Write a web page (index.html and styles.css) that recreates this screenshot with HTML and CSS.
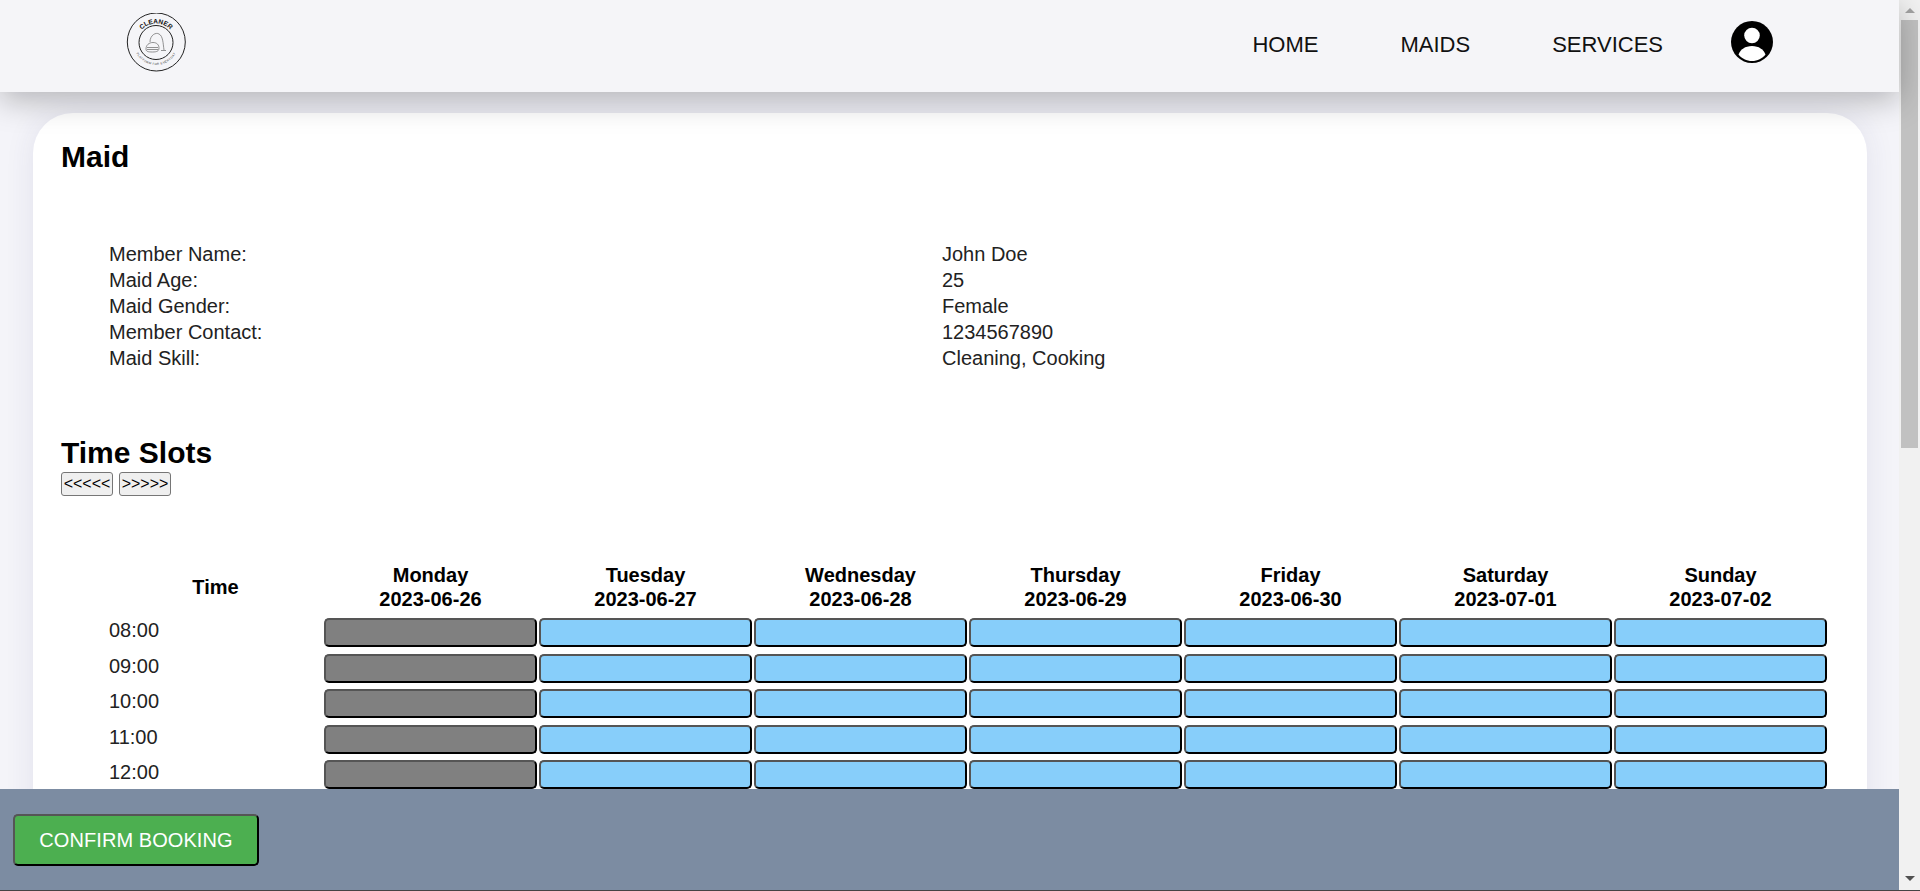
FILE: index.html
```html
<!DOCTYPE html>
<html lang="en">
<head>
<meta charset="utf-8">
<title>Maid</title>
<link rel="stylesheet" href="styles.css">
</head>
<body>
<div class="page">
  <div class="main">
    <header class="topbar">
      <svg class="logo" viewBox="0 0 60 60" aria-label="Cleaner logo">
        <defs>
          <path id="arcTop" d="M11 29.500a19 19 0 0 1 38 0"/>
          <path id="arcBottom" d="M7.500 29.500a22.500 22.500 0 0 0 45 0"/>
        </defs>
        <circle cx="30.300" cy="29" r="29" class="logo-line"/>
        <circle cx="30" cy="29.500" r="17" class="logo-line"/>
        <text class="logo-title"><textPath href="#arcTop" startOffset="50%" text-anchor="middle">CLEANER</textPath></text>
        <text class="logo-sub"><textPath href="#arcBottom" startOffset="50%" text-anchor="middle">PLATFORM FOR EVERYDAY</textPath></text>
        <path class="logo-thin" d="M24 29C24 22 30 19 33 21C37 23 37 30 38 37M35 37.500h5"/>
        <path class="logo-thin" d="M20 36c0-4 3-6.500 7-6.500s6 2.500 6 5.500-2 4-6.500 4-6.500-.5-6.500-3z"/>
        <path class="logo-thin" d="M21 34.500h11M21 36.500h11"/>
      </svg>
      <nav class="nav">
        <a class="nav-link">HOME</a>
        <a class="nav-link">MAIDS</a>
        <a class="nav-link">SERVICES</a>
      </nav>
      <svg class="avatar" viewBox="0 0 42 42" aria-label="Account">
        <circle cx="21" cy="21" r="21" fill="#000"/>
        <circle cx="21" cy="14.500" r="7.800" fill="#fff"/>
        <path d="M21 25c-7 0-11.500 3.500-13.500 8.500 3.200 4 8 6.500 13.500 6.500s10.300-2.500 13.500-6.500C32.500 28.500 28 25 21 25z" fill="#fff"/>
      </svg>
    </header>

    <main class="content">
      <section class="card">
        <h2 class="title">Maid</h2>
        <div class="info">
          <div>Member Name:</div><div>John Doe</div>
          <div>Maid Age:</div><div>25</div>
          <div>Maid Gender:</div><div>Female</div>
          <div>Member Contact:</div><div>1234567890</div>
          <div>Maid Skill:</div><div>Cleaning, Cooking</div>
        </div>
        <h2 class="title slots-title">Time Slots</h2>
        <div class="pager">
          <button class="pager-btn">&lt;&lt;&lt;&lt;&lt;</button>
          <button class="pager-btn">&gt;&gt;&gt;&gt;&gt;</button>
        </div>
        <div class="timetable">
          <div class="head">Time</div>
          <div class="head">Monday<br>2023-06-26</div>
          <div class="head">Tuesday<br>2023-06-27</div>
          <div class="head">Wednesday<br>2023-06-28</div>
          <div class="head">Thursday<br>2023-06-29</div>
          <div class="head">Friday<br>2023-06-30</div>
          <div class="head">Saturday<br>2023-07-01</div>
          <div class="head">Sunday<br>2023-07-02</div>

          <div class="time">08:00</div>
          <button class="slot off"></button><button class="slot"></button><button class="slot"></button><button class="slot"></button><button class="slot"></button><button class="slot"></button><button class="slot"></button>
          <div class="time">09:00</div>
          <button class="slot off"></button><button class="slot"></button><button class="slot"></button><button class="slot"></button><button class="slot"></button><button class="slot"></button><button class="slot"></button>
          <div class="time">10:00</div>
          <button class="slot off"></button><button class="slot"></button><button class="slot"></button><button class="slot"></button><button class="slot"></button><button class="slot"></button><button class="slot"></button>
          <div class="time">11:00</div>
          <button class="slot off"></button><button class="slot"></button><button class="slot"></button><button class="slot"></button><button class="slot"></button><button class="slot"></button><button class="slot"></button>
          <div class="time">12:00</div>
          <button class="slot off"></button><button class="slot"></button><button class="slot"></button><button class="slot"></button><button class="slot"></button><button class="slot"></button><button class="slot"></button>
        </div>
      </section>
    </main>

    <footer class="bottombar">
      <button class="confirm">CONFIRM BOOKING</button>
    </footer>
  </div>
  <div class="scrollbar" aria-hidden="true">
    <span class="arrow up"></span>
    <span class="track"><span class="thumb"></span></span>
    <span class="arrow down"></span>
  </div>
</div>
</body>
</html>
```

FILE: styles.css
```css
* { box-sizing: border-box; }
html, body { margin: 0; height: 100%; overflow: hidden; }
body { font-family: "Liberation Sans", Arial, sans-serif; color: #222; background: #f4f4f9; }

.page { display: flex; height: 891px; border-bottom: 1px solid #444; }
.main { flex: 1; min-width: 0; display: flex; flex-direction: column; height: 890px; }

.topbar {
  flex: none; height: 92px; padding: 13px 126px 0; background: #f5f5f8;
  display: flex; align-items: flex-start;
  box-shadow: 0 8px 32px rgba(0, 0, 0, .27); position: relative; z-index: 2;
}
.logo { width: 60px; height: 60px; flex: none; }
.logo-line { fill: none; stroke: #222; stroke-width: 1; }
.logo-thin { fill: none; stroke: #666; stroke-width: .7; }
.logo-title { font: bold 6.600px "Liberation Sans", sans-serif; fill: #111; }
.logo-sub { font: 3px "Liberation Sans", sans-serif; fill: #333; letter-spacing: .35px; }
.nav { margin-left: auto; display: flex; gap: 82px; padding-top: 19px; }
.nav-link { font-size: 22px; line-height: 25px; color: #111; }
.avatar { width: 42px; height: 42px; flex: none; margin: 8px 0 0 68px; }

.content { flex: 1; min-height: 0; overflow: hidden; padding: 21px 32px 0 33px; background: #f4f4f9; }
.card {
  background: #fff; border-radius: 40px 40px 0 0; padding: 27px 28px 0;
  height: 760px; box-shadow: 0 0 30px rgba(40, 40, 110, .09);
}
.title { margin: 0; font-size: 30px; line-height: 34px; font-weight: bold; color: #000; }
.info {
  display: grid; grid-template-columns: 833px 1fr; grid-auto-rows: 26px;
  margin: 67px 0 0 48px; font-size: 20px; line-height: 26px; color: #222;
}
.slots-title { margin-top: 65px; }
.pager { display: flex; gap: 6px; margin-top: 2px; }
.pager-btn {
  width: 52px; height: 24px; padding: 0; font: 16px/20px "Liberation Sans", sans-serif; color: #000;
  background: #efefef; border: 1px solid #767676; border-radius: 3px;
}
.timetable {
  display: grid; grid-template-columns: repeat(8, 213px); column-gap: 2px;
  grid-template-rows: 48.500px repeat(5, 29px); row-gap: 6.500px;
  margin: 67px 0 0 48px;
}
.head { font-size: 20px; line-height: 24px; font-weight: bold; text-align: center; color: #000; align-self: center; }
.time { font-size: 20px; line-height: 25px; color: #222; }
.slot {
  display: block; padding: 0; width: 213px; height: 29px;
  background: #87cefa; border: 2px solid; border-radius: 5px;
  border-color: #555 #000 #000 #555;
}
.slot.off { background: #808080; }

.bottombar { flex: none; height: 101px; background: #7c8ca2; padding: 25px 13px 0; position: relative; z-index: 3; }
.confirm {
  display: block; width: 246px; height: 52px; padding: 0;
  font: 20px "Liberation Sans", sans-serif; letter-spacing: .07px; color: #fff; background: #4caf50;
  border: 2px solid; border-color: #555 #000 #000 #555; border-radius: 5px;
}

.scrollbar { flex: none; width: 21px; height: 890px; background: #f1f1f1; display: flex; flex-direction: column; align-items: center; }
.arrow { flex: none; width: 0; height: 0; border-left: 5px solid transparent; border-right: 5px solid transparent; }
.arrow.up { border-bottom: 5px solid #a3a3a3; margin-top: 8px; }
.arrow.down { border-top: 5px solid #505050; margin-bottom: 9px; }
.track { flex: 1; width: 100%; padding: 7px 2px 0; }
.thumb { display: block; height: 428px; background: #c1c1c1; }
```
